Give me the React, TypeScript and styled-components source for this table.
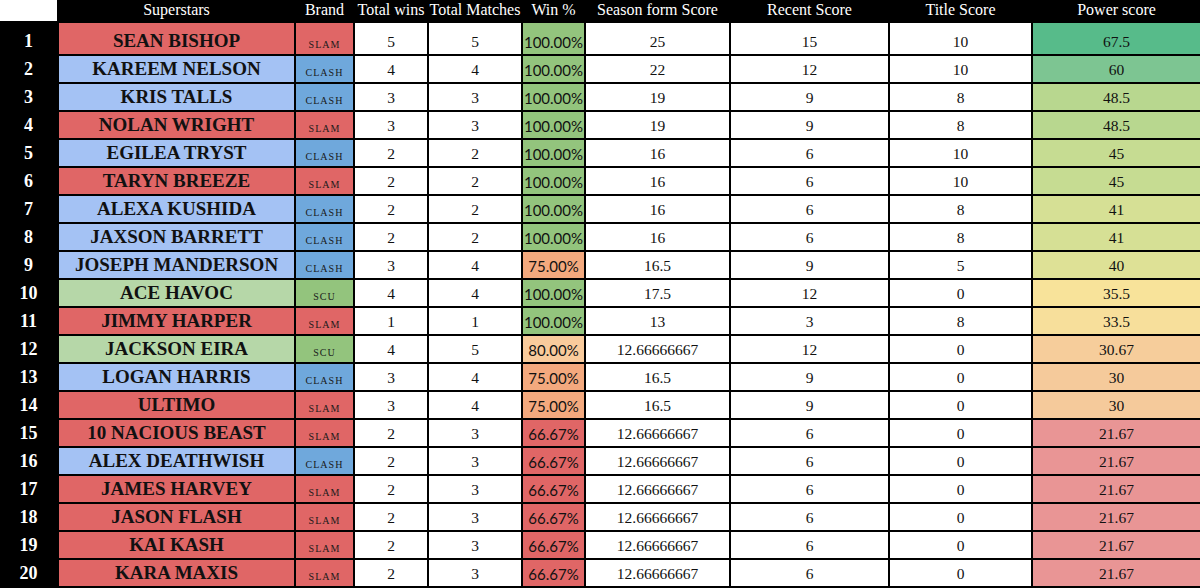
import styled, { createGlobalStyle } from "styled-components";
import React from "react";

const GlobalStyle = createGlobalStyle`
  html, body {
    margin: 0;
    padding: 0;
    background: #ffffff;
    overflow: hidden;
  }
`;

const SERIF = `"Liberation Serif", "Times New Roman", serif`;

const Sheet = styled.div`
  width: 1200px;
  height: 588px;
  display: grid;
  grid-template-columns: 57px 235px 57px 72px 92px 61px 143px 157px 141px 167px;
  grid-template-rows: 21px 31px repeat(19, 26px);
  gap: 2px;
  background: #000000;
  overflow: hidden;
`;

const Corner = styled.div`
  background: #ffffff;
`;

const HeadCell = styled.div`
  background: #000000;
  color: #ffffff;
  font-family: ${SERIF};
  font-size: 16px;
  line-height: 18px;
  display: flex;
  align-items: flex-end;
  justify-content: safe center;
  padding-bottom: 2px;
  white-space: nowrap;
  overflow: hidden;
`;

const RowNum = styled.div`
  background: #000000;
  color: #ffffff;
  font-family: ${SERIF};
  font-weight: 700;
  font-size: 18px;
  line-height: 20px;
  display: flex;
  align-items: flex-end;
  justify-content: center;
  padding-bottom: 3px;
`;

const NameCell = styled.div<{ $bg: string }>`
  background: ${(p) => p.$bg};
  color: #111111;
  font-family: ${SERIF};
  font-weight: 700;
  font-size: 19px;
  line-height: 20px;
  display: flex;
  align-items: flex-end;
  justify-content: center;
  padding-bottom: 3px;
  white-space: nowrap;
`;

const BrandCell = styled.div<{ $bg: string }>`
  background: ${(p) => p.$bg};
  color: #1a1a1a;
  font-family: ${SERIF};
  font-size: 10px;
  letter-spacing: 1px;
  line-height: 12px;
  display: flex;
  align-items: flex-end;
  justify-content: center;
  padding-bottom: 3px;
`;

const NumCell = styled.div<{ $bg?: string }>`
  background: ${(p) => p.$bg || "#ffffff"};
  color: #111111;
  font-family: ${SERIF};
  font-size: 15.5px;
  line-height: 18px;
  display: flex;
  align-items: flex-end;
  justify-content: center;
  padding-bottom: 3px;
  white-space: nowrap;
`;

const PctCell = styled.div<{ $bg: string }>`
  background: ${(p) => p.$bg};
  color: #111111;
  font-family: Lato, "Liberation Sans", sans-serif;
  font-size: 15px;
  line-height: 18px;
  display: flex;
  align-items: flex-end;
  justify-content: center;
  padding-bottom: 3px;
  white-space: nowrap;
`;

const BRANDS: Record<string, { name: string; tag: string }> = {
  SLAM: { name: "#e06666", tag: "#e06666" },
  CLASH: { name: "#a4c2f4", tag: "#6fa8dc" },
  SCU: { name: "#b6d7a8", tag: "#93c47d" },
};

const PCT: Record<string, string> = {
  "100.00%": "#93c47d",
  "80.00%": "#f9cb9c",
  "75.00%": "#f3a97e",
  "66.67%": "#e06666",
};

const POWER: Record<string, string> = {
  "67.5": "#57bb8a",
  "60": "#7dc592",
  "48.5": "#b8d78f",
  "45": "#c6dc92",
  "41": "#d6e095",
  "40": "#dee196",
  "35.5": "#f8e39a",
  "33.5": "#f7df9b",
  "30.67": "#f6cd9b",
  "30": "#f5ca9b",
  "21.67": "#e99595",
};

type Row = [string, string, number, number, string, string, number, number, string];

const rows: Row[] = [
  ["SEAN BISHOP", "SLAM", 5, 5, "100.00%", "25", 15, 10, "67.5"],
  ["KAREEM NELSON", "CLASH", 4, 4, "100.00%", "22", 12, 10, "60"],
  ["KRIS TALLS", "CLASH", 3, 3, "100.00%", "19", 9, 8, "48.5"],
  ["NOLAN WRIGHT", "SLAM", 3, 3, "100.00%", "19", 9, 8, "48.5"],
  ["EGILEA TRYST", "CLASH", 2, 2, "100.00%", "16", 6, 10, "45"],
  ["TARYN BREEZE", "SLAM", 2, 2, "100.00%", "16", 6, 10, "45"],
  ["ALEXA KUSHIDA", "CLASH", 2, 2, "100.00%", "16", 6, 8, "41"],
  ["JAXSON BARRETT", "CLASH", 2, 2, "100.00%", "16", 6, 8, "41"],
  ["JOSEPH MANDERSON", "CLASH", 3, 4, "75.00%", "16.5", 9, 5, "40"],
  ["ACE HAVOC", "SCU", 4, 4, "100.00%", "17.5", 12, 0, "35.5"],
  ["JIMMY HARPER", "SLAM", 1, 1, "100.00%", "13", 3, 8, "33.5"],
  ["JACKSON EIRA", "SCU", 4, 5, "80.00%", "12.66666667", 12, 0, "30.67"],
  ["LOGAN HARRIS", "CLASH", 3, 4, "75.00%", "16.5", 9, 0, "30"],
  ["ULTIMO", "SLAM", 3, 4, "75.00%", "16.5", 9, 0, "30"],
  ["10 NACIOUS BEAST", "SLAM", 2, 3, "66.67%", "12.66666667", 6, 0, "21.67"],
  ["ALEX DEATHWISH", "CLASH", 2, 3, "66.67%", "12.66666667", 6, 0, "21.67"],
  ["JAMES HARVEY", "SLAM", 2, 3, "66.67%", "12.66666667", 6, 0, "21.67"],
  ["JASON FLASH", "SLAM", 2, 3, "66.67%", "12.66666667", 6, 0, "21.67"],
  ["KAI KASH", "SLAM", 2, 3, "66.67%", "12.66666667", 6, 0, "21.67"],
  ["KARA MAXIS", "SLAM", 2, 3, "66.67%", "12.66666667", 6, 0, "21.67"],
];

const headers = [
  "Superstars",
  "Brand",
  "Total wins",
  "Total Matches",
  "Win %",
  "Season form Score",
  "Recent Score",
  "Title Score",
  "Power score",
];

export default function App() {
  return (
    <>
      <GlobalStyle />
      <Sheet>
        <Corner />
        {headers.map((h) => (
          <HeadCell key={h}>{h}</HeadCell>
        ))}
        {rows.map((r, i) => {
          const [name, brand, wins, matches, pct, season, recent, title, power] = r;
          return (
            <React.Fragment key={name}>
              <RowNum>{i + 1}</RowNum>
              <NameCell $bg={BRANDS[brand].name}>{name}</NameCell>
              <BrandCell $bg={BRANDS[brand].tag}>{brand}</BrandCell>
              <NumCell>{wins}</NumCell>
              <NumCell>{matches}</NumCell>
              <PctCell $bg={PCT[pct]}>{pct}</PctCell>
              <NumCell>{season}</NumCell>
              <NumCell>{recent}</NumCell>
              <NumCell>{title}</NumCell>
              <NumCell $bg={POWER[power]}>{power}</NumCell>
            </React.Fragment>
          );
        })}
      </Sheet>
    </>
  );
}
